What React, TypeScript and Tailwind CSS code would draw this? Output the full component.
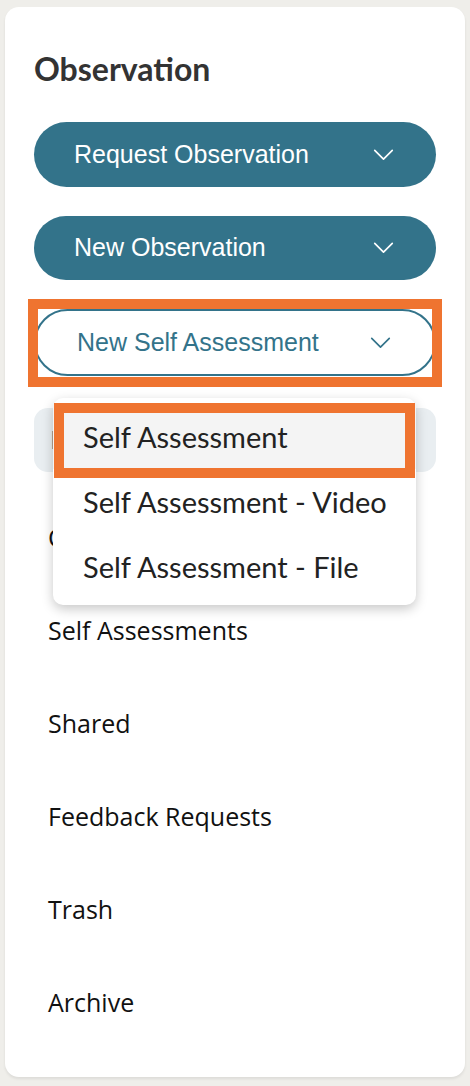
const navItems = ["Completed", "Self Assessments", "Shared", "Feedback Requests", "Trash", "Archive"];

const menuItems = ["Self Assessment", "Self Assessment - Video", "Self Assessment - File"];

function Chevron({ className }: { className?: string }) {
  return (
    <svg viewBox="0 0 22 13" className={className} fill="none" stroke="currentColor" strokeWidth="1.8" strokeLinecap="round" strokeLinejoin="round">
      <path d="M1.5 1.5 L11 11 L20.5 1.5" />
    </svg>
  );
}

export default function App() {
  return (
    <div className="min-h-[1086px] bg-[#efeeea] px-[5px] pt-[7px] pb-[9px] font-['Liberation_Sans',Arial,sans-serif]">
      <div className="rounded-[14px] bg-white px-[29px] pt-[42px] h-[1070px] shadow-[0_2px_3px_rgba(0,0,0,0.08)]">
        <h1 className="font-['Lato',sans-serif] text-[32px] font-bold leading-[40px] text-[#333333]">Observation</h1>

        <div className="mt-[33px] flex flex-col gap-[29px]">
          <button className="flex h-[65px] w-full items-center justify-between rounded-full bg-[#33738a] pl-[40px] pr-[42px] text-[25px] text-white">
            <span>Request Observation</span>
            <Chevron className="h-[12px] w-[21px]" />
          </button>
          <button className="flex h-[64px] w-full items-center justify-between rounded-full bg-[#33738a] pl-[40px] pr-[42px] text-[25px] text-white">
            <span>New Observation</span>
            <Chevron className="h-[12px] w-[21px]" />
          </button>
          <div className="relative">
            <button className="flex h-[67px] w-full items-center justify-between rounded-full border-2 border-[#33738a] bg-white pl-[41px] pr-[43px] text-[25px] text-[#33738a]">
              <span>New Self Assessment</span>
              <Chevron className="h-[12px] w-[21px]" />
            </button>
            <div className="pointer-events-none absolute -left-[6px] -right-[6px] -top-[10px] -bottom-[11px] border-[10px] border-[#ef7430]" />

            {/* dropdown menu */}
            <div className="absolute left-[19px] top-[89px] z-10 w-[363px] rounded-[10px] bg-white py-[6px] shadow-[0_4px_12px_rgba(0,0,0,0.22)]">
              {menuItems.map((item, i) => (
                <div
                  key={item}
                  className={`relative flex h-[65px] items-center pl-[30px] font-['Lato',sans-serif] text-[29px] text-[#222222] ${i === 0 ? "bg-[#f4f4f4]" : ""}`}
                >
                  {item}
                  {i === 0 && (
                    <div className="pointer-events-none absolute left-[1px] right-[1px] -top-[1px] -bottom-[9px] border-[10px] border-[#ef7430]" />
                  )}
                </div>
              ))}
            </div>
          </div>
        </div>

        <div className="mt-[32px] flex flex-col font-['Open_Sans',sans-serif] text-[25px]">
          <div className="flex h-[64px] items-center rounded-[14px] bg-[#e9eef1] px-[16px] text-[#33738a]">Drafts</div>
          <div className="flex flex-col">
            {navItems.map((item) => (
              <div key={item} className="flex h-[93px] items-center px-[14px] text-[#111111] first:mt-[19px]">
                {item}
              </div>
            ))}
          </div>
        </div>
      </div>
    </div>
  );
}
